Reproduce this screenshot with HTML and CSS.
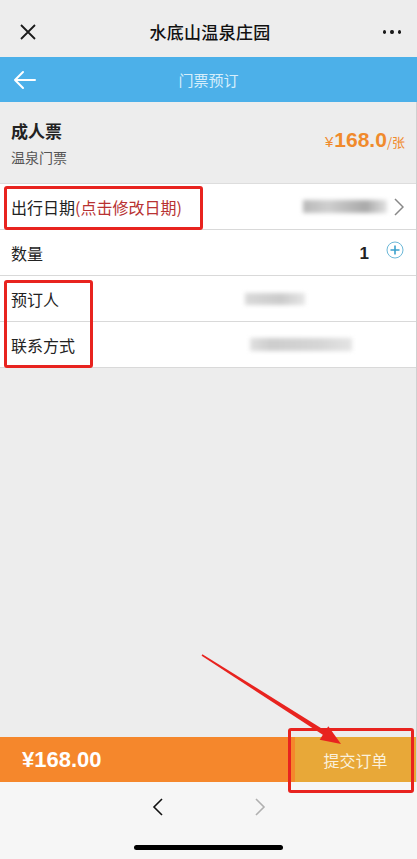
FILE: index.html
```html
<!DOCTYPE html>
<html lang="zh-CN">
<head>
    <meta charset="UTF-8">
    <title>门票预订</title>
    <meta name="viewport" content="width=device-width, initial-scale=1.0">
    <link rel="stylesheet" href="styles.css">
</head>
<body>
    <div class="wx-bar">
        <svg class="wx-close" width="18" height="18" viewBox="0 0 18 18">
            <path d="M2 2 L16 16 M16 2 L2 16" stroke="#1a1a1a" stroke-width="1.8" fill="none"/>
        </svg>
        <div class="wx-title">水底山温泉庄园</div>
        <div class="wx-more"><span></span><span></span><span></span></div>
    </div>

    <div class="nav-bar">
        <svg class="nav-back" width="24" height="20" viewBox="0 0 24 20">
            <path d="M11 2 L3 10 L11 18 M3 10 L23 10" stroke="#ffffff" stroke-width="2" fill="none" stroke-linecap="round" stroke-linejoin="round"/>
        </svg>
        <div class="nav-title">门票预订</div>
    </div>

    <div class="page">
        <div class="ticket">
            <div class="ticket-info">
                <div class="ticket-name">成人票</div>
                <div class="ticket-type">温泉门票</div>
            </div>
            <div class="ticket-price"><span class="yen">¥</span>168.0<span class="unit">/张</span></div>
        </div>

        <div class="form">
            <div class="row">
                <div class="label">出行日期<span class="hint">(点击修改日期)</span></div>
                <div class="value">
                    <span class="blur blur-date"></span>
                    <svg class="chevron" width="10" height="18" viewBox="0 0 10 18">
                        <path d="M1 1 L9 9 L1 17" stroke="#888" stroke-width="1.5" fill="none"/>
                    </svg>
                </div>
            </div>
            <div class="row">
                <div class="label">数量</div>
                <div class="value">
                    <span class="qty">1</span>
                    <svg class="plus" width="18" height="18" viewBox="0 0 18 18">
                        <circle cx="9" cy="9" r="8" stroke="#6cb8d8" stroke-width="1" fill="none"/>
                        <path d="M9 4.5 V13.5 M4.5 9 H13.5" stroke="#3aa0cc" stroke-width="1.6"/>
                    </svg>
                </div>
            </div>
            <div class="row">
                <div class="label label-fixed">预订人</div>
                <div class="field"><span class="blur blur-name"></span></div>
            </div>
            <div class="row">
                <div class="label label-fixed">联系方式</div>
                <div class="field"><span class="blur blur-phone"></span></div>
            </div>
        </div>

        <div class="spacer"></div>

        <div class="order-bar">
            <div class="total">¥168.00</div>
            <div class="submit">提交订单</div>
        </div>
    </div>

    <div class="browser-bar">
        <div class="browser-nav">
            <svg width="12" height="20" viewBox="0 0 12 20"><path d="M10 2 L2 10 L10 18" stroke="#111" stroke-width="1.6" fill="none"/></svg>
            <svg width="12" height="20" viewBox="0 0 12 20"><path d="M2 2 L10 10 L2 18" stroke="#b0b0b0" stroke-width="1.6" fill="none"/></svg>
        </div>
        <div class="home-indicator"></div>
    </div>

    <!-- annotations drawn over the screenshot -->
    <div class="mark mark-date"></div>
    <div class="mark mark-contact"></div>
    <div class="mark mark-submit"></div>
    <svg class="arrow" width="417" height="859" viewBox="0 0 417 859">
        <polygon points="201.6,655.7 202.4,654.3 327.3,731.9 324.7,736.1" fill="#e8231f"/>
        <polygon points="341,744 328.3,726.3 319.7,739.7" fill="#e8231f"/>
    </svg>
</body>
</html>
```

FILE: styles.css
```css
body {
    margin: 0;
    width: 417px;
    height: 859px;
    background-color: #ededed;
    font-family: "Noto Sans CJK SC", "Liberation Sans", sans-serif;
    color: #222222;
    display: flex;
    flex-direction: column;
    position: relative;
    overflow: hidden;
}

.wx-bar {
    height: 57px;
    display: flex;
    align-items: center;
    padding: 6px 16px 0 19px;
    box-sizing: border-box;
    background-color: #ededed;
}

.wx-close {
    width: 18px;
    height: 18px;
}

.wx-title {
    flex: 1;
    text-align: center;
    font-size: 17px;
    font-weight: 500;
    color: #111111;
    letter-spacing: 0.3px;
}

.wx-more {
    display: flex;
    gap: 4px;
    width: 18px;
}

.wx-more span {
    width: 4px;
    height: 4px;
    border-radius: 50%;
    background-color: #1a1a1a;
}

.nav-bar {
    height: 45px;
    background-color: #4cb0e9;
    display: flex;
    align-items: center;
    padding: 0 12px;
    position: relative;
}

.nav-back {
    width: 24px;
    height: 20px;
}

.nav-title {
    position: absolute;
    left: 0;
    right: 0;
    text-align: center;
    font-size: 15px;
    color: #d6eefb;
    pointer-events: none;
}

.page {
    flex: 1;
    display: flex;
    flex-direction: column;
    border-right: 1px solid #d0d0d0;
}

.ticket {
    height: 81px;
    display: flex;
    align-items: center;
    justify-content: space-between;
    padding: 0 11px 0 11px;
    box-sizing: border-box;
}

.ticket-name {
    font-size: 17px;
    font-weight: bold;
    color: #222222;
    line-height: 24px;
}

.ticket-type {
    font-size: 14px;
    color: #555555;
    line-height: 20px;
    margin-top: 4px;
}

.ticket-price {
    font-family: "Liberation Sans", sans-serif;
    font-size: 21px;
    font-weight: bold;
    color: #f08a2c;
    margin-top: -6px;
}

.ticket-price .yen {
    font-size: 15px;
    font-weight: normal;
    margin-right: 1px;
}

.ticket-price .unit {
    font-family: "Noto Sans CJK SC", sans-serif;
    font-size: 13px;
    font-weight: normal;
}

.form {
    background-color: #ffffff;
    border-top: 1px solid #dddddd;
}

.row {
    height: 45px;
    display: flex;
    align-items: center;
    padding: 0 12px 0 11px;
    border-bottom: 1px solid #d9d9d9;
    font-size: 16px;
}

.label {
    flex: none;
    color: #222222;
}

.label-fixed {
    width: 234px;
}

.hint {
    color: #b83232;
}

.value {
    flex: 1;
    display: flex;
    align-items: center;
    justify-content: flex-end;
}

.field {
    flex: 1;
}

.blur {
    display: block;
    background-color: #c8c8c8;
    filter: blur(2px);
}

.blur-date {
    width: 84px;
    height: 13px;
    margin-right: 5px;
    background: linear-gradient(90deg, #b8b8b8, #cfcfcf 30%, #b5b5b5 60%, #a9a9a9 75%, #e2e2e2);
}

.blur-name {
    width: 60px;
    height: 12px;
    background: linear-gradient(90deg, #d9d9d9, #cbcbcb 60%, #e6e6e6);
}

.blur-phone {
    width: 102px;
    height: 13px;
    margin-left: 5px;
    background: linear-gradient(90deg, #e0e0e0, #cdcdcd 20%, #d6d6d6 70%, #e4e4e4);
}

.chevron {
    margin-left: 2px;
}

.qty {
    font-family: "Liberation Sans", sans-serif;
    font-size: 17px;
    font-weight: bold;
    color: #222222;
    margin-right: 17px;
    margin-top: 3px;
}

.plus {
    margin-top: -6px;
}

.spacer {
    flex: 1;
}

.order-bar {
    height: 45px;
    display: flex;
    background-color: #f5872c;
}

.total {
    flex: 1;
    display: flex;
    align-items: center;
    padding-left: 22px;
    font-family: "Liberation Sans", sans-serif;
    font-size: 22px;
    font-weight: bold;
    color: #ffffff;
}

.submit {
    width: 121px;
    background-color: #e8a838;
    color: #fbf1dc;
    font-size: 16px;
    display: flex;
    align-items: center;
    justify-content: center;
}

.browser-bar {
    height: 77px;
    background-color: #f6f6f6;
    display: flex;
    flex-direction: column;
    align-items: center;
}

.browser-nav {
    display: flex;
    gap: 90px;
    margin-top: 15px;
}

.home-indicator {
    width: 149px;
    height: 5px;
    border-radius: 3px;
    background-color: #000000;
    margin-top: 28px;
}

.mark {
    position: absolute;
    border: 3px solid #e8231f;
    border-radius: 3px;
    box-sizing: border-box;
}

.mark-date {
    left: 4px;
    top: 186px;
    width: 199px;
    height: 44px;
}

.mark-contact {
    left: 4px;
    top: 280px;
    width: 89px;
    height: 88px;
}

.mark-submit {
    left: 288px;
    top: 728px;
    width: 126px;
    height: 65px;
}

.arrow {
    position: absolute;
    left: 0;
    top: 0;
    pointer-events: none;
}
```
